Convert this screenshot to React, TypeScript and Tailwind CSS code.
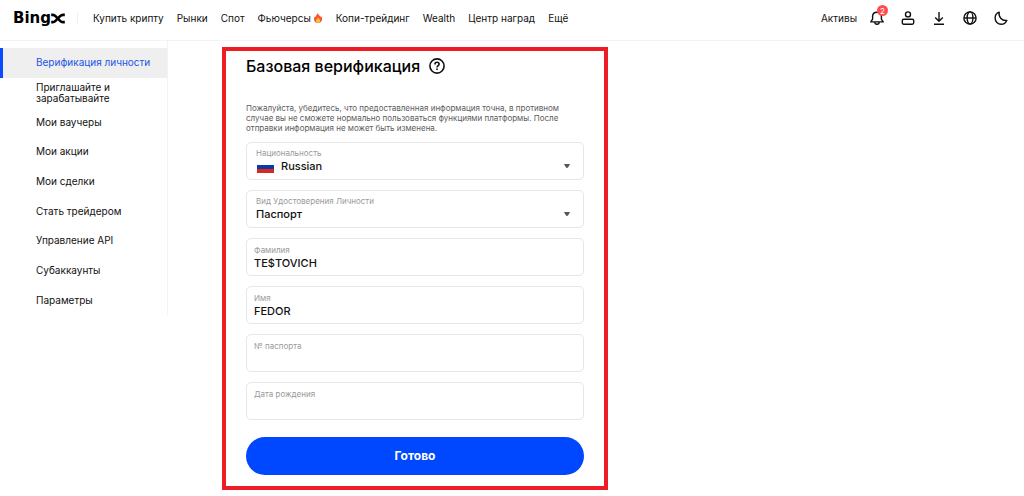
import { useState } from 'react';
import type { ReactNode } from 'react';

/** Links shown in the top navigation, left to right. */
const NAV_LINKS = ['Купить крипту', 'Рынки', 'Спот', 'Фьючерсы', 'Копи-трейдинг', 'Wealth', 'Центр наград', 'Ещё'];

/** Account sections; the first one is the current page. */
const SIDEBAR_LINKS = [
  'Верификация личности',
  'Приглашайте и зарабатывайте',
  'Мои ваучеры',
  'Мои акции',
  'Мои сделки',
  'Стать трейдером',
  'Управление API',
  'Субаккаунты',
  'Параметры',
];

/** Shared wrapper for the 16px line icons in the header. */
function LineIcon({ children }: { children: ReactNode }) {
  return (
    <svg
      viewBox="0 0 16 16"
      className="size-4"
      fill="none"
      stroke="currentColor"
      strokeWidth="1.4"
      strokeLinejoin="round"
      aria-hidden="true"
    >
      {children}
    </svg>
  );
}

/** Small two-tone flame next to the futures link. */
function FlameIcon() {
  return (
    <svg viewBox="0 0 10 10" className="ml-0.5 size-[10px]" aria-hidden="true">
      <path d="M4.8 0.2C5.2 1.8 7 2.5 7.4 4.1C7.8 3.7 7.9 3.2 7.9 2.7C8.8 3.8 9.2 5 9.1 6.2C8.9 8.4 7.2 9.9 5 9.9C2.7 9.9 1 8.3 1 6.2C1 4.8 1.7 3.8 2.2 3C2.4 3.6 2.6 4 3 4.3C3 2.6 3.6 1 4.8 0.2Z" fill="#f8562c" />
      <path d="M5 4.2C5.3 5.4 7.2 6 7.1 7.8C7 9.2 6.1 9.8 5 9.8C3.8 9.8 2.9 9 2.9 7.8C2.9 6.9 3.4 6.4 3.7 5.9C3.9 6.3 4.1 6.5 4.4 6.6C4.3 5.7 4.5 4.8 5 4.2Z" fill="#ffc23d" />
    </svg>
  );
}

/** Brand word mark: text plus the drawn X. */
function Logo() {
  return (
    <a href="#home" aria-label="BingX" className="flex items-center text-black">
      <span className="font-['DejaVu_Sans','Inter',sans-serif] text-[15px] font-bold leading-5">Bing</span>
      <svg viewBox="0 0 14 11" className="mt-px h-[11px] w-[14px]" fill="none" stroke="currentColor" aria-hidden="true">
        <path d="M0.2 1.9H1.8C3 1.9 3.6 2.3 4.5 3.2L9.1 7.8C10 8.7 10.8 9.1 12 9.1H13.8" strokeWidth="2.6" />
        <path d="M13.8 1.9H12C10.8 1.9 10 2.3 9.1 3.2L4.5 7.8C3.6 8.7 3 9.1 1.8 9.1H0.2" strokeWidth="2.6" />
      </svg>
    </a>
  );
}

function Header() {
  const iconButton = 'relative size-4 cursor-pointer';
  return (
    <header className="flex h-[41px] items-center justify-between border-b border-[#f3f3f3] pb-1 pl-[13px] pr-[15px]">
      <div className="flex items-center">
        <Logo />
        <span className="ml-3 h-3 w-px bg-[#f0f0f0]" />
        <nav className="ml-[15px] flex items-center gap-[13px]">
          {NAV_LINKS.map((link) => (
            <a key={link} href="#nav" className="flex items-center whitespace-nowrap">
              {link}
              {link === 'Фьючерсы' && <FlameIcon />}
            </a>
          ))}
        </nav>
      </div>
      <div className="flex items-center gap-3">
        <a href="#assets">Активы</a>
        <div className="flex items-center gap-[15px]">
          <button type="button" aria-label="Уведомления" className={iconButton}>
            <LineIcon>
              <path d="M3.6 9.2V6.6C3.6 4 5.5 2.2 8 2.2S12.4 4 12.4 6.6V9.2L14.2 11.9H1.8Z" />
              <path d="M5.8 12C5.8 13.4 6.7 14.3 8 14.3S10.2 13.4 10.2 12" />
            </LineIcon>
            <span className="absolute -right-[3px] -top-[5px] flex size-[11px] items-center justify-center rounded-full bg-[#ff4d4f] text-[8px] leading-none text-white">
              2
            </span>
          </button>
          <button type="button" aria-label="Профиль" className={iconButton}>
            <LineIcon>
              <circle cx="8" cy="4.4" r="2.5" />
              <rect x="2.3" y="9.2" width="11.4" height="5" rx="1.4" />
            </LineIcon>
          </button>
          <button type="button" aria-label="Скачать" className={iconButton}>
            <LineIcon>
              <path d="M8 2V11M4.2 7.4L8 11.2L11.8 7.4M3 14.2H13" />
            </LineIcon>
          </button>
          <button type="button" aria-label="Язык" className={iconButton}>
            <LineIcon>
              <circle cx="8" cy="8" r="6.1" />
              <ellipse cx="8" cy="8" rx="2.9" ry="6.1" />
              <path d="M2 8H14" />
            </LineIcon>
          </button>
          <button type="button" aria-label="Тёмная тема" className={iconButton}>
            <LineIcon>
              <path d="M6.2 2.2C5.2 6.6 8.6 11 13.8 10.4C12.8 12.8 10.7 14.2 8.2 14.2C4.8 14.2 2.1 11.5 2.1 8.1C2.1 5.3 3.8 3 6.2 2.2Z" />
            </LineIcon>
          </button>
        </div>
      </div>
    </header>
  );
}

function Sidebar() {
  return (
    <aside className="w-[168px] shrink-0 self-start border-r border-[#f3f3f3] pt-[7px]">
      <ul className="flex h-[267px] flex-col">
        {SIDEBAR_LINKS.map((link, i) => (
          <li key={link} className="flex-1">
            <a
              href="#section"
              aria-current={i === 0 ? 'page' : undefined}
              className={`flex h-full items-center border-l-[3px] pl-[33px] leading-[11px] ${
                i === 0 ? 'whitespace-nowrap border-[#0a4bff] bg-[#efefef] text-[#2354e6]' : 'border-transparent pr-10'
              }`}
            >
              {link}
            </a>
          </li>
        ))}
      </ul>
    </aside>
  );
}

interface SelectFieldProps {
  id: string;
  label: string;
  options: string[];
  /** Optional picture drawn before the selected value. */
  icon?: ReactNode;
}

/** Outlined drop-down with its caption inside the frame. */
function SelectField({ id, label, options, icon }: SelectFieldProps) {
  return (
    <div className="relative h-[38px] rounded-[5px] border border-[#e6e6e6] px-[9px] pt-[5px]">
      <label htmlFor={id} className="block text-[8px] leading-[11px] text-[#9a9a9a]">
        {label}
      </label>
      <div className="flex items-center">
        {icon}
        <select id={id} className="h-[15px] flex-1 appearance-none bg-transparent text-[11px] font-medium leading-[15px] outline-none">
          {options.map((option) => (
            <option key={option}>{option}</option>
          ))}
        </select>
      </div>
      <svg viewBox="0 0 6 4" className="pointer-events-none absolute right-[13px] top-[21px] h-1 w-[6px]" aria-hidden="true">
        <path d="M0 0H6L4 3.5Q3 4.3 2 3.5Z" fill="#555" />
      </svg>
    </div>
  );
}

/** Outlined text box with its caption inside the frame. */
function TextField({ id, label, initial = '' }: { id: string; label: string; initial?: string }) {
  const [value, setValue] = useState(initial);
  return (
    <div className="h-[38px] rounded-[5px] border border-[#e6e6e6] px-[7px] pt-[6px]">
      <label htmlFor={id} className="block text-[8px] leading-[11px] text-[#9a9a9a]">
        {label}
      </label>
      <input
        id={id}
        value={value}
        onChange={(e) => setValue(e.target.value)}
        className="block h-[15px] w-full bg-transparent text-[11px] font-medium leading-[15px] outline-none"
      />
    </div>
  );
}

function RussianFlag() {
  return (
    <span className="ml-px mr-[7px] flex h-3 w-[17px] flex-col" aria-hidden="true">
      <span className="flex-1 bg-white" />
      <span className="flex-1 bg-[#0a3ba8]" />
      <span className="flex-1 bg-[#d8291f]" />
    </span>
  );
}

function VerificationForm() {
  return (
    <form
      onSubmit={(e) => e.preventDefault()}
      className="w-full max-w-[386px] border-4 border-[#ee1c25] px-5 pb-[11px] pt-1"
    >
      <div className="flex items-center gap-[9px]">
        <h1 className="text-[16px] font-medium leading-[22px] text-black">Базовая верификация</h1>
        <button type="button" aria-label="Справка" className="size-4 cursor-pointer">
          <svg viewBox="0 0 16 16" className="size-4" fill="none" stroke="currentColor" strokeWidth="1.6" aria-hidden="true">
            <circle cx="8" cy="8" r="7.1" />
            <path d="M5.9 6.4C5.9 5.1 6.8 4.3 8 4.3S10.1 5.1 10.1 6.2C10.1 7.5 8 7.6 8 9.4M8 10.5V12" />
          </svg>
        </button>
      </div>
      <p className="mt-[26px] text-[8px] leading-[10px] text-[#5c5c5c]">
        Пожалуйста, убедитесь, что предоставленная информация точна, в противном случае вы не сможете нормально
        пользоваться функциями платформы. После отправки информация не может быть изменена.
      </p>
      <div className="mt-[9px] flex flex-col gap-[10px]">
        <SelectField id="nationality" label="Национальность" options={['Russian']} icon={<RussianFlag />} />
        <SelectField id="document" label="Вид Удостоверения Личности" options={['Паспорт']} />
        <TextField id="surname" label="Фамилия" initial="TE$TOVICH" />
        <TextField id="name" label="Имя" initial="FEDOR" />
        <TextField id="passport" label="№ паспорта" />
        <TextField id="birthday" label="Дата рождения" />
      </div>
      <button type="submit" className="mt-[17px] h-[38px] w-full cursor-pointer rounded-full bg-[#0048ff] text-[12px] font-bold text-white">
        Готово
      </button>
    </form>
  );
}

export default function App() {
  return (
    <div className="min-h-screen bg-white font-['Inter','Liberation_Sans',sans-serif] text-[10px] leading-[14px] text-[#111]">
      <Header />
      <div className="flex items-start">
        <Sidebar />
        <main className="flex-1 pl-[54px] pt-[6px]">
          <VerificationForm />
        </main>
      </div>
    </div>
  );
}
